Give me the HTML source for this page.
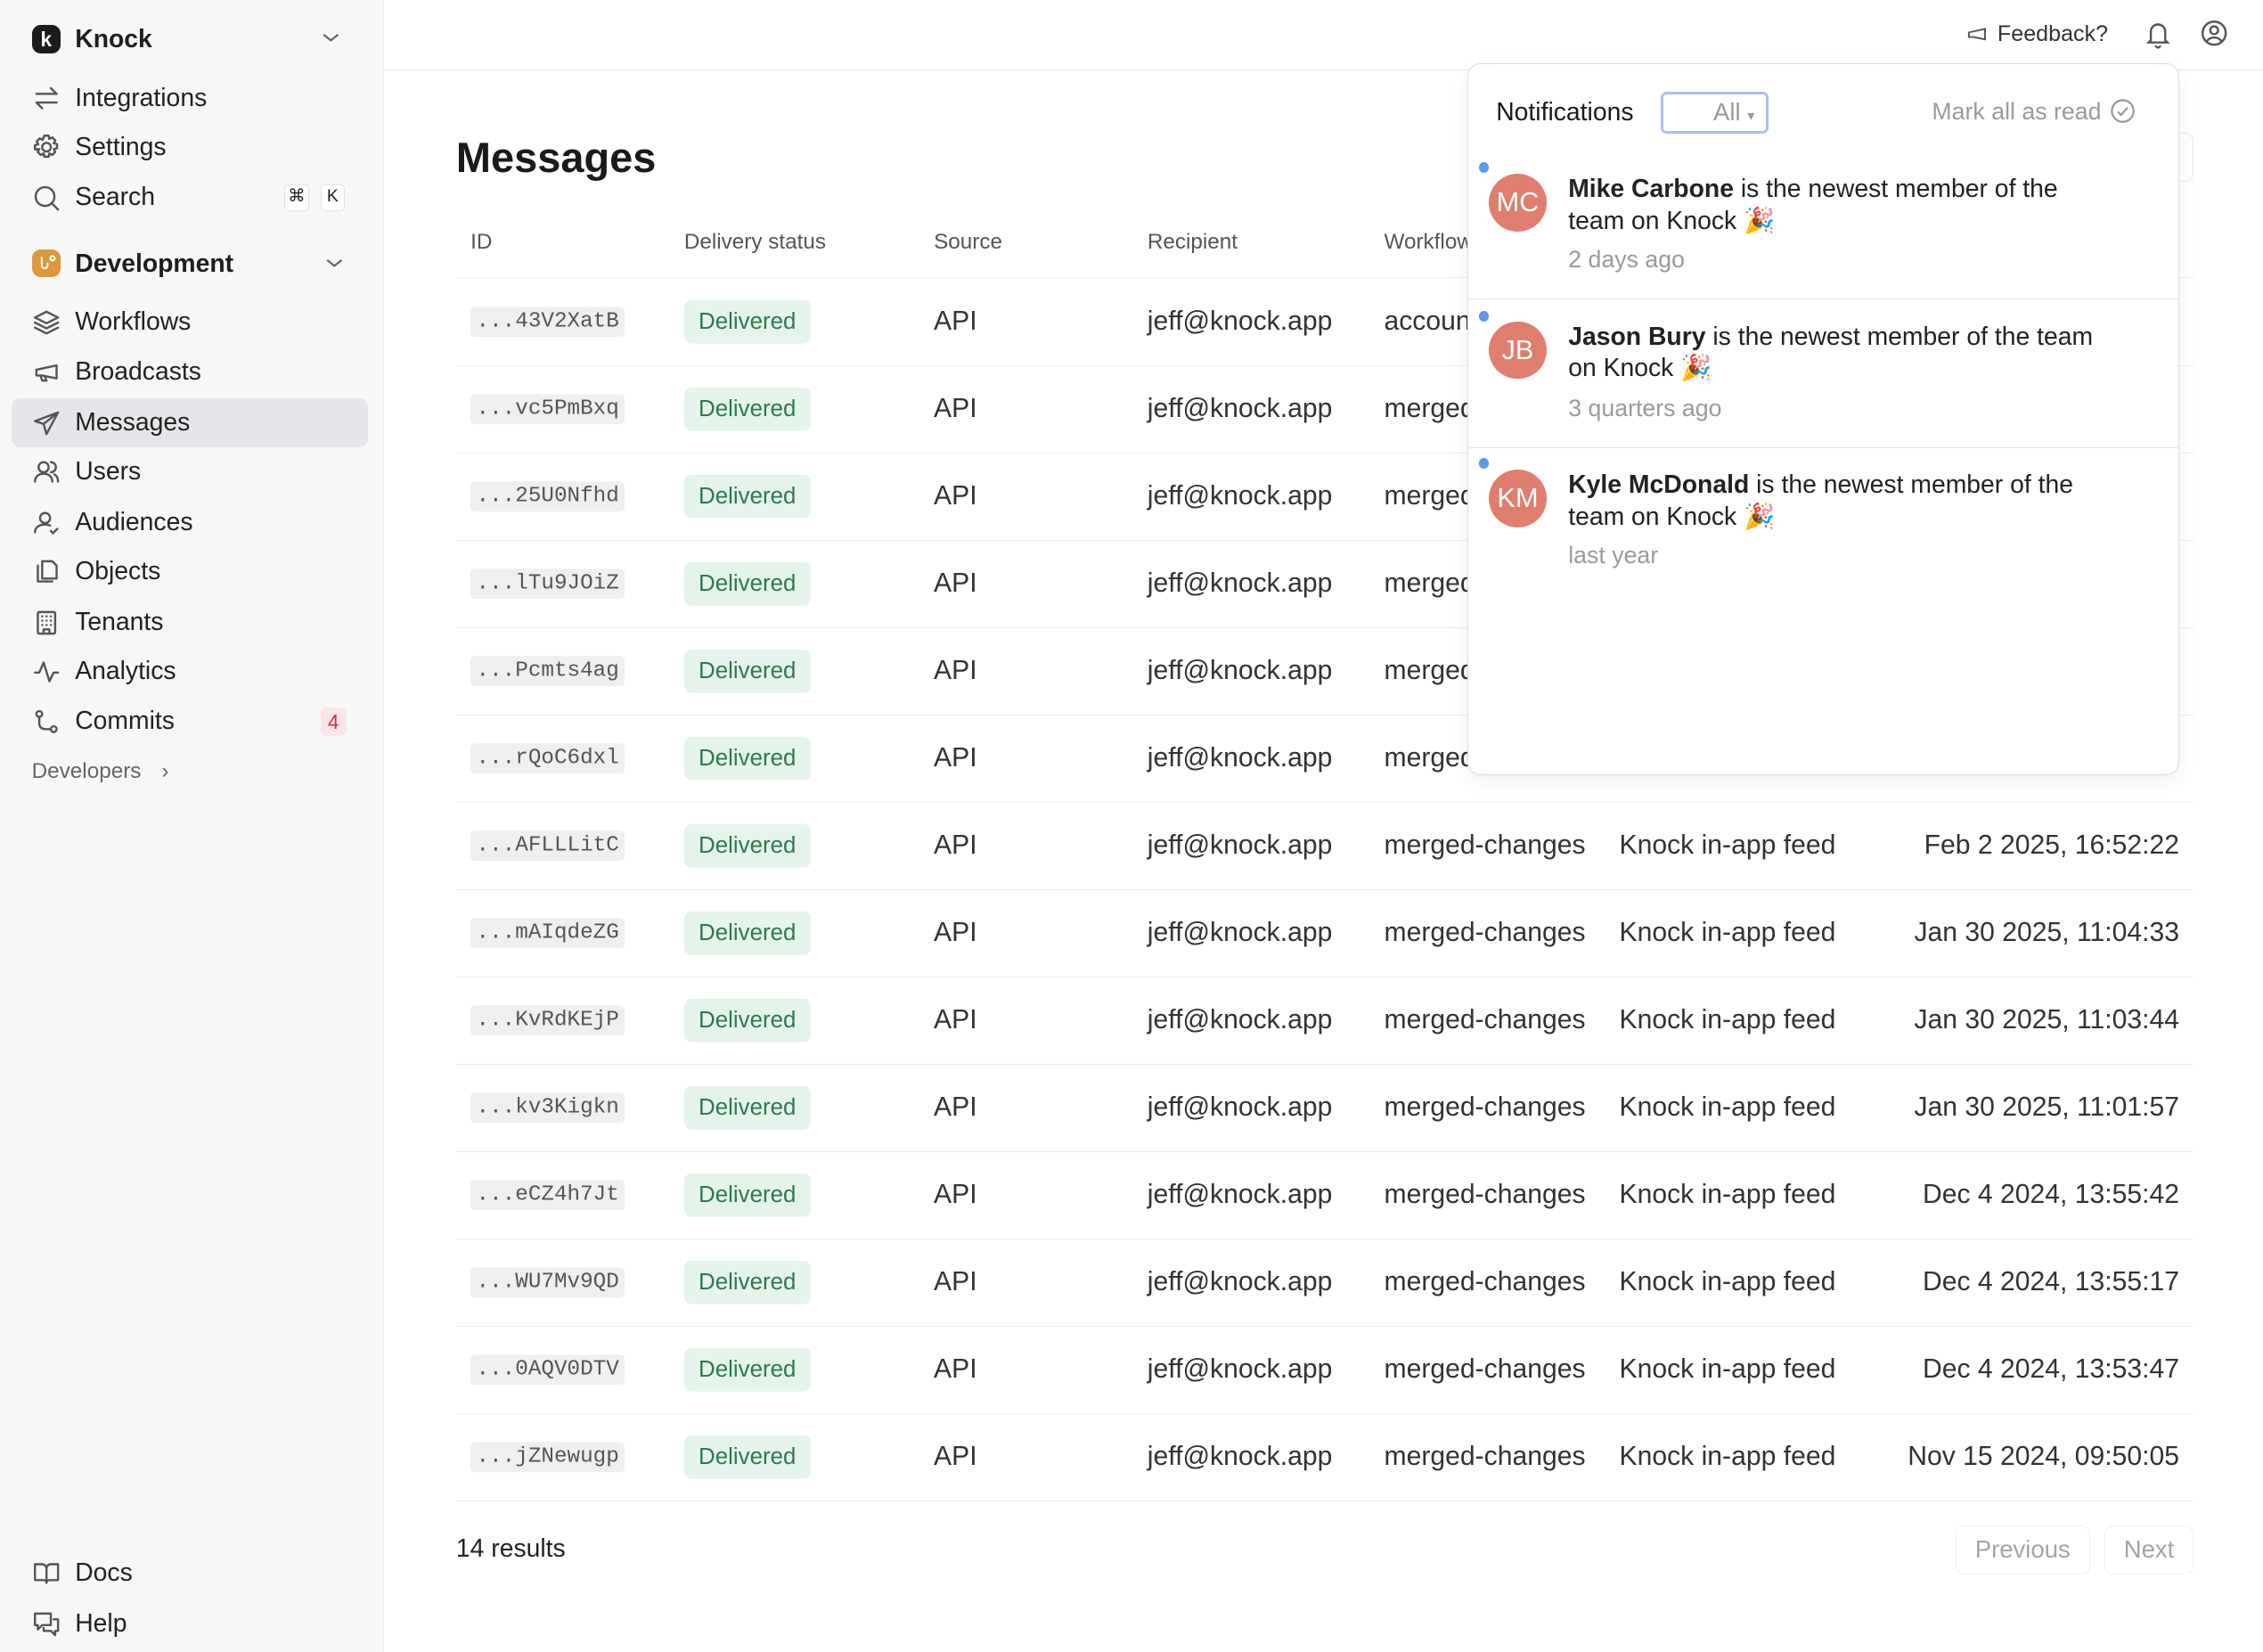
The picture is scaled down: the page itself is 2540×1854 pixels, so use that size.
<!DOCTYPE html>
<html><head><meta charset="utf-8"><style>
*{box-sizing:border-box;margin:0;padding:0}
html,body{width:2540px;height:1854px;overflow:hidden;background:#fff}
#w{zoom:1.6199;width:1568px;height:1145px;position:relative;font-family:"Liberation Sans",sans-serif;color:#1f1f1f}
.abs{position:absolute}
#side{left:0;top:0;width:266px;height:1145px;background:#f7f7f6;border-right:1px solid #e9e9e9}
.nav{position:absolute;left:22px;height:34px;display:flex;align-items:center;font-size:17.5px;color:#222}
.nav svg{width:20px;height:20px;margin-right:10px;fill:none;stroke:#555;stroke-width:1.5;stroke-linecap:round;stroke-linejoin:round}
.kbd{position:absolute;top:128px;width:17px;height:18px;border:1px solid #e2e2e2;border-radius:3px;background:#fff;font-size:12px;text-align:center;line-height:16px}
.hdr{top:0;left:266px;right:0;height:49px;border-bottom:1px solid #e6e6e6}
.th{position:absolute;top:159px;font-size:15px;color:#555}
.row{position:absolute;left:316px;width:1204px;height:60.5px;border-bottom:1px solid #ececec;font-size:18.6px;color:#333}
.row span{position:absolute;top:50%;transform:translateY(-50%);white-space:nowrap}
.id{left:10px;background:#efeff0;font-family:"Liberation Mono",monospace;font-size:15px;color:#555;padding:2px 4px;border-radius:3px}
.dl{left:158px;background:#e5f4ea;color:#2d7a4e;font-size:16px;padding:6px 10px;border-radius:5px}
.c3{left:331px}.c4{left:479px}.c5{left:643px}.c6{left:806px}.c7{right:10px}
#panel{left:1017px;top:44px;width:493px;height:493px;background:#fff;border:1px solid #dcdcdf;border-radius:9px;box-shadow:0 4px 14px rgba(0,0,0,.06)}
.av{position:absolute;left:14px;width:40px;height:40px;border-radius:50%;background:#e07e6e;color:#fff;font-size:19px;text-align:center;line-height:40px}
.dot{position:absolute;left:7px;width:7px;height:7px;border-radius:50%;background:#5b9be8}
.nt{position:absolute;left:69px;width:372px;font-size:17.5px;line-height:22px;color:#222}
.tm{position:absolute;left:69px;font-size:16.5px;color:#9a9aa0}
.btn{position:absolute;top:1057px;height:34px;border:1px solid #eee;border-radius:6px;color:#a5a5a5;font-size:17px;line-height:32px;text-align:center}
</style></head><body><div id="w">
<div id="side" class="abs">
 <div class="abs" style="left:22px;top:17px;width:20px;height:20px;border-radius:6px;background:#1b1b1b;color:#fff;font-weight:bold;font-size:14px;text-align:center;line-height:20px">k</div>
 <div class="abs" style="left:52px;top:17px;font-size:17.5px;font-weight:600">Knock</div>
 <svg class="abs" style="left:222px;top:21px" width="14" height="10" viewBox="0 0 14 10"><path d="M2 3l5 4 5-4" stroke="#666" stroke-width="1.4" fill="none"/></svg>
 <div class="nav" style="top:51px"><svg viewBox="0 0 20 20"><path d="M3 7h14M13 3l4 4M17 13H3M7 17l-4-4"/></svg>Integrations</div>
 <div class="nav" style="top:85px"><svg viewBox="0 0 20 20"><circle cx="10" cy="10" r="3"/><path d="M8.5 2h3l.5 2.3 2-1.1 2.1 2.1-1.1 2 2.3.5v3l-2.3.5 1.1 2-2.1 2.1-2-1.1-.5 2.3h-3l-.5-2.3-2 1.1-2.1-2.1 1.1-2L2 11.5v-3l2.3-.5-1.1-2 2.1-2.1 2 1.1z"/></svg>Settings</div>
 <div class="nav" style="top:120px"><svg viewBox="0 0 20 20"><circle cx="9" cy="9" r="6.5"/><path d="M14 14l4 4"/></svg>Search</div>
 <div class="kbd" style="left:197px">⌘</div><div class="kbd" style="left:222px">K</div>
 <div class="abs" style="left:22px;top:173px;width:20px;height:19px;border-radius:6px;background:#e0983a"></div>
 <svg class="abs" style="left:26px;top:176px" width="13" height="13" viewBox="0 0 13 13"><path d="M3 2v6a2 2 0 004 0V6M9 3a1.5 1.5 0 110 .1" stroke="#fff" stroke-width="1.3" fill="none"/></svg>
 <div class="abs" style="left:52px;top:173px;font-size:17.5px;font-weight:600">Development</div>
 <svg class="abs" style="left:225px;top:177px" width="14" height="10" viewBox="0 0 14 10"><path d="M2 3l5 4 5-4" stroke="#666" stroke-width="1.4" fill="none"/></svg>
 <div class="nav" style="top:206px"><svg viewBox="0 0 20 20"><path d="M10 3l8 4-8 4-8-4zM2 10.5l8 4 8-4M2 14l8 4 8-4"/></svg>Workflows</div>
 <div class="abs" style="left:8px;top:276px;width:247px;height:34px;border-radius:6px;background:#e6e6ea"></div>
 <div class="nav" style="top:241px"><svg viewBox="0 0 20 20"><path d="M17 5v9L7 12H3V8l14-3zM6 12.5l1 3h3l-1-2.6"/></svg>Broadcasts</div>
 <div class="nav" style="top:276px"><svg viewBox="0 0 20 20"><path d="M18 3L2 9l6 2 2 7z M8 11l10-8"/></svg>Messages</div>
 <div class="nav" style="top:310px"><svg viewBox="0 0 20 20"><circle cx="8" cy="7" r="3.5"/><path d="M2 17c0-3.5 2.7-5.5 6-5.5s6 2 6 5.5M13 3.5a3.5 3.5 0 010 7M15.5 12c1.5.8 2.5 2.5 2.5 5"/></svg>Users</div>
 <div class="nav" style="top:345px"><svg viewBox="0 0 20 20"><circle cx="9" cy="7" r="3.5"/><path d="M2 17c0-3.5 3-5.5 7-5.5 1.5 0 2.5.3 3.5.7M13 16l1.5 1.5 3-3"/></svg>Audiences</div>
 <div class="nav" style="top:379px"><svg viewBox="0 0 20 20"><path d="M7 3h7l3 3v9H7zM4 6v11h10"/></svg>Objects</div>
 <div class="nav" style="top:414px"><svg viewBox="0 0 20 20"><rect x="4" y="3" width="12" height="15" rx="1"/><path d="M7 6h.1M10 6h.1M13 6h.1M7 9h.1M10 9h.1M13 9h.1M7 12h.1M10 12h.1M13 12h.1M8 18v-3h4v3"/></svg>Tenants</div>
 <div class="nav" style="top:448px"><svg viewBox="0 0 20 20"><path d="M2 11h3l3-7 4 13 3-6h3"/></svg>Analytics</div>
 <div class="nav" style="top:483px"><svg viewBox="0 0 20 20"><circle cx="5" cy="4.5" r="2"/><circle cx="15" cy="15" r="2"/><path d="M5 6.5V11c0 3 2 4 5 4h3"/></svg>Commits</div>
 <div class="abs" style="left:222px;top:490px;width:18px;height:20px;border-radius:4px;background:#fbe5e8;color:#d0344a;font-size:14px;text-align:center;line-height:20px">4</div>
 <div class="abs" style="left:22px;top:526px;font-size:15px;color:#666">Developers <span style="margin-left:10px">›</span></div>
 <div class="nav" style="top:1073px"><svg viewBox="0 0 20 20"><path d="M2 4h5a3 3 0 013 3v10a2 2 0 00-2-2H2zM18 4h-5a3 3 0 00-3 3v10a2 2 0 012-2h6z"/></svg>Docs</div>
 <div class="nav" style="top:1108px"><svg viewBox="0 0 20 20"><path d="M2 3h11v8H7l-3 3v-3H2zM15 7h3v8h-2v3l-3-3H8v-2"/></svg>Help</div>
</div>
<div class="hdr abs"></div>
<div class="abs" style="left:1362px;top:15px;font-size:15.5px;color:#333;display:flex;align-items:center"><svg width="16" height="16" viewBox="0 0 20 20" style="margin-right:6px"><path d="M17 5v9L7 12H3V8l14-3z" stroke="#555" stroke-width="1.5" fill="none"/></svg>Feedback?</div>
<svg class="abs" style="left:1485px;top:13px" width="20" height="22" viewBox="0 0 20 22"><path d="M5 15V9a5 5 0 0110 0v6l1.5 1.5h-13zM8.5 18.5a1.5 1.5 0 003 0" stroke="#555" stroke-width="1.5" fill="none"/></svg>
<svg class="abs" style="left:1524px;top:13px" width="20" height="20" viewBox="0 0 20 20"><circle cx="10" cy="10" r="8" stroke="#555" stroke-width="1.5" fill="none"/><circle cx="10" cy="8" r="2.7" stroke="#555" stroke-width="1.5" fill="none"/><path d="M5 15.5c1.5-2 3-2.5 5-2.5s3.5.5 5 2.5" stroke="#555" stroke-width="1.5" fill="none"/></svg>
<div class="abs" style="left:316px;top:92px;font-size:29px;font-weight:600;color:#1a1a1a">Messages</div>
<div class="abs" style="left:1490px;top:92px;width:30px;height:34px;border:1px solid #e6e6e6;border-radius:6px"></div>
<div class="th" style="left:326px">ID</div><div class="th" style="left:474px">Delivery status</div><div class="th" style="left:647px">Source</div><div class="th" style="left:795px">Recipient</div><div class="th" style="left:959px">Workflow</div><div class="th" style="left:1122px">Channel</div>
<div class="abs" style="left:316px;top:192px;width:1204px;border-top:1px solid #ececec"></div>
<div class="row" style="top:193px"><span class="id">...43V2XatB</span><span class="dl">Delivered</span><span class="c3">API</span><span class="c4">jeff@knock.app</span><span class="c5">account-created</span><span class="c6">Knock in-app feed</span><span class="c7">Feb 5 2025, 10:12:01</span></div>
<div class="row" style="top:253.5px"><span class="id">...vc5PmBxq</span><span class="dl">Delivered</span><span class="c3">API</span><span class="c4">jeff@knock.app</span><span class="c5">merged-changes</span><span class="c6">Knock in-app feed</span><span class="c7">Feb 4 2025, 10:12:01</span></div>
<div class="row" style="top:314px"><span class="id">...25U0Nfhd</span><span class="dl">Delivered</span><span class="c3">API</span><span class="c4">jeff@knock.app</span><span class="c5">merged-changes</span><span class="c6">Knock in-app feed</span><span class="c7">Feb 4 2025, 10:12:01</span></div>
<div class="row" style="top:374.5px"><span class="id">...lTu9JOiZ</span><span class="dl">Delivered</span><span class="c3">API</span><span class="c4">jeff@knock.app</span><span class="c5">merged-changes</span><span class="c6">Knock in-app feed</span><span class="c7">Feb 3 2025, 10:12:01</span></div>
<div class="row" style="top:435px"><span class="id">...Pcmts4ag</span><span class="dl">Delivered</span><span class="c3">API</span><span class="c4">jeff@knock.app</span><span class="c5">merged-changes</span><span class="c6">Knock in-app feed</span><span class="c7">Feb 3 2025, 10:12:01</span></div>
<div class="row" style="top:495.5px"><span class="id">...rQoC6dxl</span><span class="dl">Delivered</span><span class="c3">API</span><span class="c4">jeff@knock.app</span><span class="c5">merged-changes</span><span class="c6">Knock in-app feed</span><span class="c7">Feb 2 2025, 16:52:30</span></div>
<div class="row" style="top:556px"><span class="id">...AFLLLitC</span><span class="dl">Delivered</span><span class="c3">API</span><span class="c4">jeff@knock.app</span><span class="c5">merged-changes</span><span class="c6">Knock in-app feed</span><span class="c7">Feb 2 2025, 16:52:22</span></div>
<div class="row" style="top:616.5px"><span class="id">...mAIqdeZG</span><span class="dl">Delivered</span><span class="c3">API</span><span class="c4">jeff@knock.app</span><span class="c5">merged-changes</span><span class="c6">Knock in-app feed</span><span class="c7">Jan 30 2025, 11:04:33</span></div>
<div class="row" style="top:677px"><span class="id">...KvRdKEjP</span><span class="dl">Delivered</span><span class="c3">API</span><span class="c4">jeff@knock.app</span><span class="c5">merged-changes</span><span class="c6">Knock in-app feed</span><span class="c7">Jan 30 2025, 11:03:44</span></div>
<div class="row" style="top:737.5px"><span class="id">...kv3Kigkn</span><span class="dl">Delivered</span><span class="c3">API</span><span class="c4">jeff@knock.app</span><span class="c5">merged-changes</span><span class="c6">Knock in-app feed</span><span class="c7">Jan 30 2025, 11:01:57</span></div>
<div class="row" style="top:798px"><span class="id">...eCZ4h7Jt</span><span class="dl">Delivered</span><span class="c3">API</span><span class="c4">jeff@knock.app</span><span class="c5">merged-changes</span><span class="c6">Knock in-app feed</span><span class="c7">Dec 4 2024, 13:55:42</span></div>
<div class="row" style="top:858.5px"><span class="id">...WU7Mv9QD</span><span class="dl">Delivered</span><span class="c3">API</span><span class="c4">jeff@knock.app</span><span class="c5">merged-changes</span><span class="c6">Knock in-app feed</span><span class="c7">Dec 4 2024, 13:55:17</span></div>
<div class="row" style="top:919px"><span class="id">...0AQV0DTV</span><span class="dl">Delivered</span><span class="c3">API</span><span class="c4">jeff@knock.app</span><span class="c5">merged-changes</span><span class="c6">Knock in-app feed</span><span class="c7">Dec 4 2024, 13:53:47</span></div>
<div class="row" style="top:979.5px"><span class="id">...jZNewugp</span><span class="dl">Delivered</span><span class="c3">API</span><span class="c4">jeff@knock.app</span><span class="c5">merged-changes</span><span class="c6">Knock in-app feed</span><span class="c7">Nov 15 2024, 09:50:05</span></div>
<div class="abs" style="left:316px;top:1063px;font-size:17.5px;color:#222">14 results</div>
<div class="btn" style="left:1355px;width:93px">Previous</div>
<div class="btn" style="left:1458px;width:62px">Next</div>
<div id="panel" class="abs">
 <div class="abs" style="left:19px;top:23px;font-size:17.5px;color:#1a1a1a">Notifications</div>
 <div class="abs" style="left:133px;top:19px;width:75px;height:29px;border:2px solid #aebff0;border-radius:4px;font-size:17px;color:#999;text-align:right;padding-right:8px;line-height:25px">All <span style="font-size:10px">▾</span></div>
 <div class="abs" style="left:321px;top:23px;font-size:16.5px;color:#9a9aa0;display:flex;align-items:center">Mark all as read<svg width="18" height="18" viewBox="0 0 18 18" style="margin-left:6px"><circle cx="9" cy="9" r="7.5" stroke="#9a9aa0" stroke-width="1.4" fill="none"/><path d="M5.5 9.5l2.3 2.2 4.5-5" stroke="#9a9aa0" stroke-width="1.4" fill="none"/></svg></div>
 <div class="dot" style="top:68px"></div><div class="av" style="top:76px">MC</div>
 <div class="nt" style="top:76px"><b style="font-weight:600">Mike Carbone</b> is the newest member of the team on Knock 🎉</div>
 <div class="tm" style="top:126px">2 days ago</div>
 <div class="abs" style="left:0;right:0;top:162px;border-top:1px solid #e4e4e7"></div>
 <div class="dot" style="top:171px"></div><div class="av" style="top:178px">JB</div>
 <div class="nt" style="top:178px"><b style="font-weight:600">Jason Bury</b> is the newest member of the team on Knock 🎉</div>
 <div class="tm" style="top:229px">3 quarters ago</div>
 <div class="abs" style="left:0;right:0;top:265px;border-top:1px solid #e4e4e7"></div>
 <div class="dot" style="top:273px"></div><div class="av" style="top:281px">KM</div>
 <div class="nt" style="top:281px"><b style="font-weight:600">Kyle McDonald</b> is the newest member of the team on Knock 🎉</div>
 <div class="tm" style="top:331px">last year</div>
</div>
</div></body></html>
